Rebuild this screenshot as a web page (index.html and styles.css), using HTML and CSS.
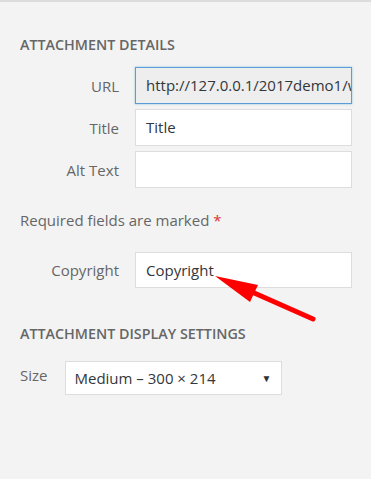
FILE: index.html
```html
<!DOCTYPE html>
<html lang="en">
<head>
    <meta charset="UTF-8">
    <meta name="viewport" content="width=device-width, initial-scale=1.0">
    <title>Attachment Details</title>
    <link rel="stylesheet" href="styles.css">
</head>
<body>

<div class="sidebar">
    <h2 class="section-title">Attachment Details</h2>

    <div class="settings">
        <label class="setting-label" for="url">URL</label>
        <div class="field field-readonly" id="url">http://127.0.0.1/2017demo1/w</div>

        <label class="setting-label" for="title">Title</label>
        <div class="field" id="title">Title</div>

        <label class="setting-label" for="alt">Alt Text</label>
        <div class="field" id="alt"></div>
    </div>

    <p class="required-note">Required fields are marked <span class="required">*</span></p>

    <div class="settings settings-custom">
        <label class="setting-label" for="copyright">Copyright</label>
        <div class="field" id="copyright">Copyright</div>
    </div>

    <h2 class="section-title display-title">Attachment Display Settings</h2>

    <div class="display-row">
        <span class="display-label">Size</span>
        <div class="select-box">
            <span>Medium &ndash; 300 &times; 214</span>
            <span class="select-caret">&#9660;</span>
        </div>
    </div>

    <!-- annotation arrow drawn over the form -->
    <svg class="annotation" width="120" height="60" viewBox="0 0 120 60">
        <polygon points="13,12 56,21 48,38" fill="#f00"/>
        <line x1="50" y1="28" x2="111" y2="55" stroke="#f00" stroke-width="5" stroke-linecap="round"/>
    </svg>
</div>

</body>
</html>
```

FILE: styles.css
```css
:root {
    --panel-bg: #f3f3f3;
    --text-muted: #666;
    --text-color: #32373c;
    --field-border: #ddd;
    --focus-border: #5b9dd9;
}

* {
    margin: 0;
    padding: 0;
    box-sizing: border-box;
}

body {
    font-family: "Open Sans", "Noto Sans", sans-serif;
    background-color: var(--panel-bg);
    color: var(--text-color);
}

.sidebar {
    position: relative;
    width: 371px;
    height: 479px;
    border-top: 2px solid #dcdcdc;
    padding: 33px 0 0 20px;
    overflow: hidden;
}

.section-title {
    font-size: 14.3px;
    font-weight: 600;
    text-transform: uppercase;
    color: var(--text-muted);
    line-height: 20px;
}

.settings {
    display: grid;
    grid-template-columns: 99px 217px;
    column-gap: 16px;
    row-gap: 5px;
    align-items: center;
    margin-top: 12px;
}

.setting-label {
    text-align: right;
    font-size: 15px;
    color: var(--text-muted);
}

.field {
    height: 37px;
    background-color: #fff;
    border: 1px solid var(--field-border);
    padding: 0 10px;
    font-size: 15px;
    line-height: 35px;
    color: var(--text-color);
    white-space: nowrap;
    overflow: hidden;
}

.field-readonly {
    background-color: #eee;
    border-color: var(--focus-border);
    box-shadow: 0 0 2px rgba(30, 140, 190, 0.5);
}

.required-note {
    margin-top: 22px;
    font-size: 15px;
    line-height: 20px;
    color: var(--text-muted);
}

.required {
    color: #dc3232;
}

.settings-custom {
    margin-top: 22px;
}

.settings-custom .field {
    height: 36px;
}

.display-title {
    margin-top: 36px;
}

.display-row {
    display: flex;
    align-items: flex-start;
    gap: 18px;
    margin-top: 17px;
}

.display-label {
    font-size: 15px;
    color: var(--text-muted);
    line-height: 28px;
}

.select-box {
    width: 217px;
    height: 34px;
    background-color: #fff;
    border: 1px solid var(--field-border);
    display: flex;
    justify-content: space-between;
    align-items: center;
    padding: 0 10px 0 8px;
    font-size: 15px;
    color: var(--text-color);
}

.select-caret {
    font-size: 10px;
    color: #333;
}

.annotation {
    position: absolute;
    left: 202px;
    top: 262px;
}
```
